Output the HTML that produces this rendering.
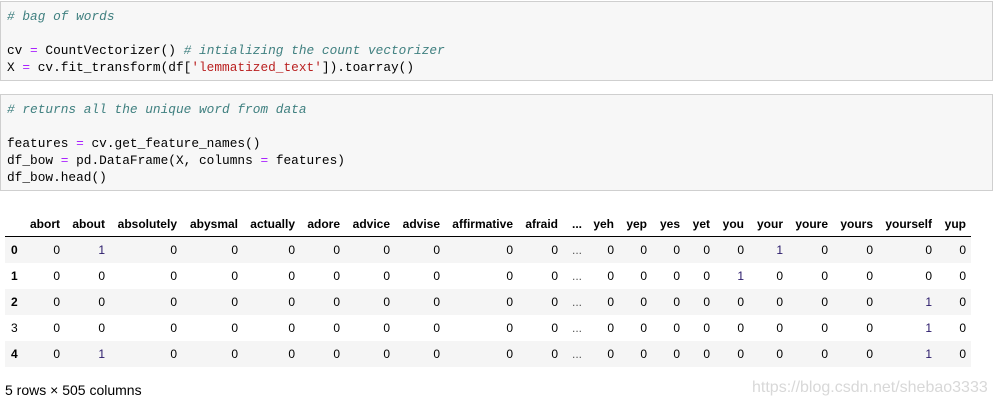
<!DOCTYPE html>
<html><head><meta charset="utf-8"><style>
body{margin:0;width:995px;height:404px;background:#fff;position:relative;overflow:hidden;font-family:"Liberation Sans",Arial,sans-serif}
.cell{position:absolute;left:0;width:993px;background:#f7f7f7;border:1px solid #cfcfcf;font-family:"Liberation Mono",monospace;font-size:12.8px;line-height:17px;color:#000;white-space:pre;padding:0 0 0 6px;box-sizing:border-box}
.c{color:#408080;font-style:italic}.o{color:#aa22ff}.s{color:#ba2121}
table{position:absolute;left:5px;top:211px;border-collapse:collapse;table-layout:fixed;font-size:12px;color:#000}
td,th{padding:0 5px 0 0;text-align:right;height:26px;white-space:nowrap;overflow:hidden}
th{font-weight:bold;height:25px}
thead tr{border-bottom:1px solid #000}
tbody tr:nth-child(odd){background:#f5f5f5}
tbody th{text-align:left;padding-left:6px}
.p{color:#2a1a6a}
.d{color:#555}
</style></head><body>
<div class="cell" style="top:1px;height:80px;padding-top:6px"><span class="c"># bag of words</span>

cv <span class="o">=</span> CountVectorizer() <span class="c"># intializing the count vectorizer</span>
X <span class="o">=</span> cv.fit_transform(df[<span class="s">'lemmatized_text'</span>]).toarray()</div>
<div class="cell" style="top:94px;height:97px;padding-top:6px"><span class="c"># returns all the unique word from data</span>

features <span class="o">=</span> cv.get_feature_names()
df_bow <span class="o">=</span> pd.DataFrame(X, columns <span class="o">=</span> features)
df_bow.head()</div>
<table>
<colgroup><col style="width:20px"><col style="width:40px"><col style="width:45px"><col style="width:72px"><col style="width:61px"><col style="width:57px"><col style="width:45px"><col style="width:50px"><col style="width:50px"><col style="width:73px"><col style="width:45px"><col style="width:24px"><col style="width:32px"><col style="width:33px"><col style="width:33px"><col style="width:30px"><col style="width:34px"><col style="width:39px"><col style="width:45px"><col style="width:45px"><col style="width:59px"><col style="width:34px"></colgroup>
<thead><tr><th></th><th>abort</th><th>about</th><th>absolutely</th><th>abysmal</th><th>actually</th><th>adore</th><th>advice</th><th>advise</th><th>affirmative</th><th>afraid</th><th>...</th><th>yeh</th><th>yep</th><th>yes</th><th>yet</th><th>you</th><th>your</th><th>youre</th><th>yours</th><th>yourself</th><th>yup</th></tr></thead>
<tbody>
<tr><th>0</th><td>0</td><td class="p">1</td><td>0</td><td>0</td><td>0</td><td>0</td><td>0</td><td>0</td><td>0</td><td>0</td><td class="d">...</td><td>0</td><td>0</td><td>0</td><td>0</td><td>0</td><td class="p">1</td><td>0</td><td>0</td><td>0</td><td>0</td></tr>
<tr><th>1</th><td>0</td><td>0</td><td>0</td><td>0</td><td>0</td><td>0</td><td>0</td><td>0</td><td>0</td><td>0</td><td class="d">...</td><td>0</td><td>0</td><td>0</td><td>0</td><td class="p">1</td><td>0</td><td>0</td><td>0</td><td>0</td><td>0</td></tr>
<tr><th>2</th><td>0</td><td>0</td><td>0</td><td>0</td><td>0</td><td>0</td><td>0</td><td>0</td><td>0</td><td>0</td><td class="d">...</td><td>0</td><td>0</td><td>0</td><td>0</td><td>0</td><td>0</td><td>0</td><td>0</td><td class="p">1</td><td>0</td></tr>
<tr><th style="font-weight:normal">3</th><td>0</td><td>0</td><td>0</td><td>0</td><td>0</td><td>0</td><td>0</td><td>0</td><td>0</td><td>0</td><td class="d">...</td><td>0</td><td>0</td><td>0</td><td>0</td><td>0</td><td>0</td><td>0</td><td>0</td><td class="p">1</td><td>0</td></tr>
<tr><th>4</th><td>0</td><td class="p">1</td><td>0</td><td>0</td><td>0</td><td>0</td><td>0</td><td>0</td><td>0</td><td>0</td><td class="d">...</td><td>0</td><td>0</td><td>0</td><td>0</td><td>0</td><td>0</td><td>0</td><td>0</td><td class="p">1</td><td>0</td></tr>
</tbody></table>
<div style="position:absolute;left:5px;top:382px;font-size:14px;color:#000">5 rows × 505 columns</div>
<div style="position:absolute;left:752px;top:379px;font-size:16px;color:#d8d8d8">https://blog.csdn.net/shebao3333</div>
</body></html>
